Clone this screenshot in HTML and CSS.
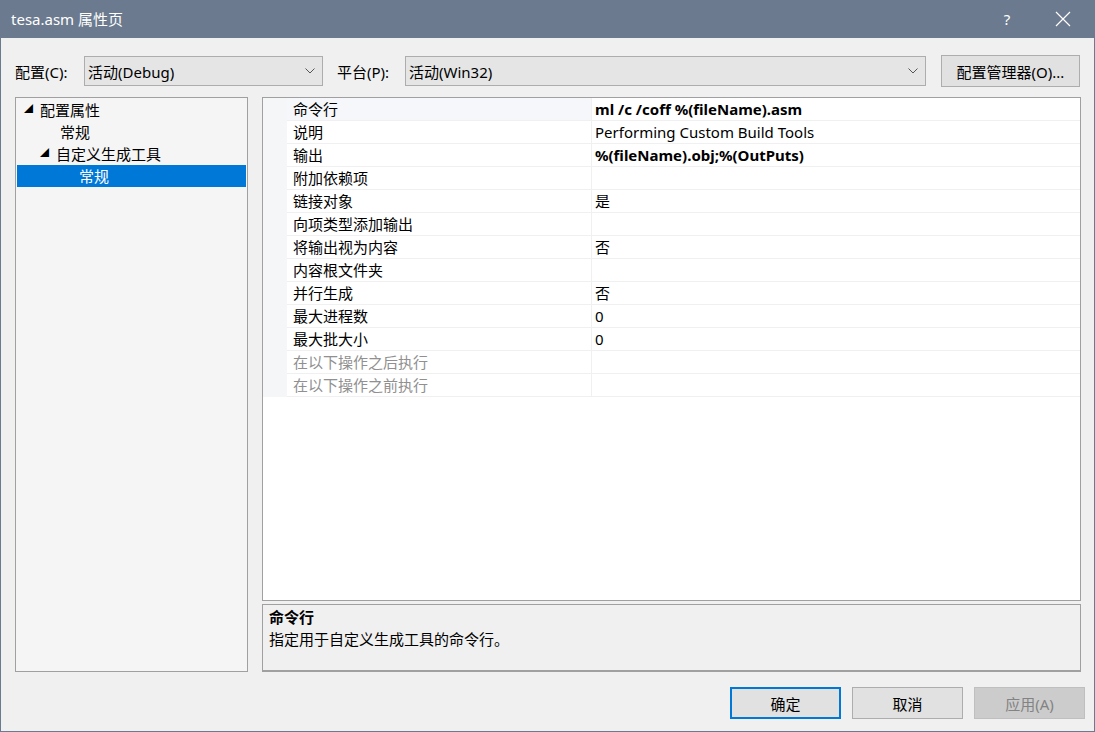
FILE: index.html
```html
<!DOCTYPE html>
<html>
<head>
<meta charset="utf-8">
<link rel="stylesheet" href="styles.css">
</head>
<body>
<div class="window">
  <div class="titlebar">
    <div class="title">tesa.asm 属性页</div>
    <div class="tb-btn help">?</div>
    <div class="tb-btn close">
      <svg width="16" height="16" viewBox="0 0 16 16"><path d="M1 1 L15 15 M15 1 L1 15" stroke="#ffffff" stroke-width="1.2" fill="none"/></svg>
    </div>
  </div>
  <div class="content">
    <div class="toolbar">
      <span class="lbl">配置(C):</span>
      <div class="combo combo-config"><span>活动(Debug)</span><svg class="chev" width="10" height="6" viewBox="0 0 10 6"><path d="M0.5 0.5 L5 5 L9.5 0.5" stroke="#555" fill="none"/></svg></div>
      <span class="lbl lbl-plat">平台(P):</span>
      <div class="combo combo-plat"><span>活动(Win32)</span><svg class="chev" width="10" height="6" viewBox="0 0 10 6"><path d="M0.5 0.5 L5 5 L9.5 0.5" stroke="#555" fill="none"/></svg></div>
      <div class="btn btn-mgr">配置管理器(O)...</div>
    </div>
    <div class="main">
      <div class="tree">
        <div class="node lv0"><span class="tri">◢</span>配置属性</div>
        <div class="node lv1">常规</div>
        <div class="node lv1b"><span class="tri">◢</span>自定义生成工具</div>
        <div class="node lv2 sel">常规</div>
      </div>
      <div class="right">
        <div class="grid">
          <div class="row selrow"><div class="gutter"></div><div class="name">命令行</div><div class="val bold">ml /c /coff %(fileName).asm</div></div>
          <div class="row"><div class="gutter"></div><div class="name">说明</div><div class="val">Performing Custom Build Tools</div></div>
          <div class="row"><div class="gutter"></div><div class="name">输出</div><div class="val bold">%(fileName).obj;%(OutPuts)</div></div>
          <div class="row"><div class="gutter"></div><div class="name">附加依赖项</div><div class="val"></div></div>
          <div class="row"><div class="gutter"></div><div class="name">链接对象</div><div class="val">是</div></div>
          <div class="row"><div class="gutter"></div><div class="name">向项类型添加输出</div><div class="val"></div></div>
          <div class="row"><div class="gutter"></div><div class="name">将输出视为内容</div><div class="val">否</div></div>
          <div class="row"><div class="gutter"></div><div class="name">内容根文件夹</div><div class="val"></div></div>
          <div class="row"><div class="gutter"></div><div class="name">并行生成</div><div class="val">否</div></div>
          <div class="row"><div class="gutter"></div><div class="name">最大进程数</div><div class="val">0</div></div>
          <div class="row"><div class="gutter"></div><div class="name">最大批大小</div><div class="val">0</div></div>
          <div class="row dis"><div class="gutter"></div><div class="name">在以下操作之后执行</div><div class="val"></div></div>
          <div class="row dis"><div class="gutter"></div><div class="name">在以下操作之前执行</div><div class="val"></div></div>
        </div>
        <div class="desc">
          <div class="desc-title">命令行</div>
          <div class="desc-text">指定用于自定义生成工具的命令行。</div>
        </div>
      </div>
    </div>
    <div class="footer">
      <div class="btn fbtn ok">确定</div>
      <div class="btn fbtn">取消</div>
      <div class="btn fbtn disabled">应用(A)</div>
    </div>
  </div>
</div>
</body>
</html>
```

FILE: styles.css
```css
* { box-sizing: border-box; }
html, body { margin: 0; padding: 0; }
body {
  width: 1095px;
  height: 732px;
  overflow: hidden;
  font-family: "Segoe UI", "Noto Sans", "Noto Sans CJK SC", sans-serif;
  font-size: 15px;
  color: #000;
  background: #f0f0f0;
}
.window {
  width: 1095px;
  height: 732px;
  border: 1px solid #6b7a8e;
  border-top: none;
  display: flex;
  flex-direction: column;
  background: #f0f0f0;
}
.titlebar {
  height: 38px;
  background: #6b7a8e;
  display: flex;
  align-items: center;
  color: #fff;
  flex-shrink: 0;
  margin: 0 -1px;
}
.title {
  flex: 1;
  padding-left: 11px;
  font-size: 15px;
  padding-bottom: 2px;
}
.tb-btn {
  display: flex;
  align-items: center;
  justify-content: center;
  height: 38px;
}
.help { width: 30px; margin-right: 18px; font-size: 15px; }
.close { width: 46px; margin-right: 9px; }
.content {
  flex: 1;
  display: flex;
  flex-direction: column;
  padding: 17px 13px 13px 14px;
}
.toolbar {
  display: flex;
  align-items: center;
  height: 32px;
}
.lbl { width: 69px; flex-shrink: 0; }
.lbl-plat { margin-left: 14px; width: 68px; }
.combo {
  height: 30px;
  background: #e5e5e5;
  border: 1px solid #adadad;
  display: flex;
  align-items: center;
  padding-left: 3px;
  flex-shrink: 0;
}
.combo span { flex: 1; }
.combo .chev { margin-right: 7px; }
.combo-config { width: 239px; }
.combo-plat { width: 521px; }
.btn {
  height: 32px;
  background: #e1e1e1;
  border: 1px solid #adadad;
  display: flex;
  align-items: center;
  justify-content: center;
  white-space: nowrap;
}
.btn-mgr { width: 139px; margin-left: 15px; }
.main {
  display: flex;
  margin-top: 10px;
  height: 575px;
}
.tree {
  width: 233px;
  background: #f5f5f5;
  border: 1px solid #a0a0a0;
  padding: 1px;
}
.node {
  height: 22px;
  line-height: 22px;
  white-space: nowrap;
}
.tri {
  display: inline-block;
  font-size: 9px;
  width: 16px;
  vertical-align: top;
  line-height: 22px;
  transform: translateY(-1px);
}
.lv0 { padding-left: 7px; }
.lv1 { padding-left: 43px; }
.lv1b { padding-left: 23px; }
.lv2 { padding-left: 62px; }
.sel { background: #0078d7; color: #fff; }
.right {
  margin-left: 14px;
  width: 819px;
  display: flex;
  flex-direction: column;
}
.grid {
  height: 504px;
  background: #fff;
  border: 1px solid #a0a0a0;
}
.row {
  display: flex;
  height: 23px;
  line-height: 22px;
  border-bottom: 1px solid #f0f0f0;
}
.gutter {
  width: 24px;
  background: #f5f6f7;
  margin-bottom: -1px;
}
.name {
  width: 305px;
  padding-left: 6px;
  border-right: 1px solid #f0f0f0;
  white-space: nowrap;
}
.selrow .name { background: #f5f7fb; }
.val {
  flex: 1;
  padding-left: 3px;
  white-space: nowrap;
}
.bold { font-weight: bold; }
.dis .name { color: #909090; }
.desc {
  margin-top: 3px;
  height: 68px;
  background: #f0f0f0;
  border: 1px solid #a0a0a0;
  border-bottom: 2px solid #a0a0a0;
  padding: 1px 6px;
}
.desc-title { font-weight: bold; height: 22px; line-height: 22px; }
.desc-text { height: 22px; line-height: 22px; }
.footer {
  display: flex;
  justify-content: flex-end;
  margin-top: 15px;
  gap: 11px;
  margin-right: -4px;
}
.fbtn { width: 111px; }
.ok { border: 2px solid #0078d7; }
.disabled { background: #cccccc; border-color: #bfbfbf; color: #838383; }
```
